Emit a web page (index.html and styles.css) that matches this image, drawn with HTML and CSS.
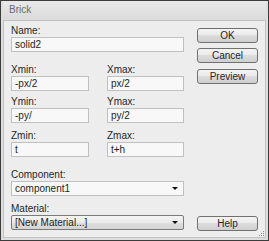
FILE: index.html
```html
<!DOCTYPE html>
<html lang="en">
<head>
<meta charset="UTF-8">
<title>Brick</title>
<link rel="stylesheet" href="styles.css">
</head>
<body>
    <div class="dialog">
        <div class="titlebar">Brick</div>
        <div class="client">
            <div class="form">
                <div class="field name-field">
                    <label>Name:</label>
                    <input type="text" value="solid2">
                </div>

                <div class="pair pair-x">
                    <div class="field">
                        <label>Xmin:</label>
                        <input type="text" value="-px/2">
                    </div>
                    <div class="field">
                        <label>Xmax:</label>
                        <input type="text" value="px/2">
                    </div>
                </div>
                <div class="pair pair-y">
                    <div class="field">
                        <label>Ymin:</label>
                        <input type="text" value="-py/">
                    </div>
                    <div class="field">
                        <label>Ymax:</label>
                        <input type="text" value="py/2">
                    </div>
                </div>
                <div class="pair pair-z">
                    <div class="field">
                        <label>Zmin:</label>
                        <input type="text" value="t">
                    </div>
                    <div class="field">
                        <label>Zmax:</label>
                        <input type="text" value="t+h">
                    </div>
                </div>

                <div class="field component-field">
                    <label>Component:</label>
                    <div class="combo">component1<span class="arrow"></span></div>
                </div>
                <div class="field material-field">
                    <label>Material:</label>
                    <div class="combo combo-button">[New Material...]<span class="arrow"></span></div>
                </div>
            </div>

            <div class="buttons">
                <button class="btn-ok">OK</button>
                <button class="btn-cancel">Cancel</button>
                <button class="btn-preview">Preview</button>
                <button class="btn-help">Help</button>
            </div>

            <svg class="grip" width="7" height="7" viewBox="0 0 7 7">
                <rect x="5" y="1" width="1" height="1" fill="#8a8a8a"/>
                <rect x="3" y="3" width="1" height="1" fill="#8a8a8a"/>
                <rect x="5" y="3" width="1" height="1" fill="#8a8a8a"/>
                <rect x="1" y="5" width="1" height="1" fill="#8a8a8a"/>
                <rect x="3" y="5" width="1" height="1" fill="#8a8a8a"/>
                <rect x="5" y="5" width="1" height="1" fill="#8a8a8a"/>
            </svg>
        </div>
    </div>
</body>
</html>
```

FILE: styles.css
```css
body {
    margin: 0;
    padding: 0;
    font-family: 'Liberation Sans', Arial, sans-serif;
    font-size: 10px;
    color: #262626;
    background-color: #ffffff;
}

.dialog {
    width: 269px;
    height: 241px;
    box-sizing: border-box;
    border: 1px solid #3c3c3c;
    padding: 0 2px 2px 2px;
    background-color: #dedede;
    display: flex;
    flex-direction: column;
}

.titlebar {
    height: 19px;
    line-height: 18px;
    padding-left: 6px;
    color: #6a6a6a;
    background: linear-gradient(#e9e9e9, #dadada);
}

.client {
    position: relative;
    flex: 1;
    display: flex;
    justify-content: space-between;
    padding: 4px 7px 6px 7px;
    border: 1px solid #c2c2c2;
    background-color: #ededed;
}

.form {
    width: 173px;
}

.field label {
    display: block;
    height: 12px;
    line-height: 12px;
}

input[type="text"],
.combo {
    display: block;
    width: 100%;
    height: 15px;
    box-sizing: border-box;
    margin: 0;
    padding: 0 3px;
    border: 1px solid #c0c0c0;
    background-color: #f8f8f8;
    font-family: 'Liberation Sans', Arial, sans-serif;
    font-size: 10px;
    color: #1e1e1e;
    line-height: 13px;
    outline: none;
}

.pair {
    display: grid;
    grid-template-columns: 78px 77px;
    column-gap: 18px;
}

/* spacing between rows */
.pair-x {margin-top: 12px;}
.pair-y {margin-top: 5px;}
.pair-z {margin-top: 7px;}
.component-field {margin-top: 12px;}
.material-field {margin-top: 7px;}

.combo {
    position: relative;
}

.combo-button {
    border-color: #7a7a7a;
    border-radius: 2px;
    background: linear-gradient(#f4f4f4, #eaeaea 50%, #dedede 51%, #d4d4d4);
}

.arrow {
    position: absolute;
    right: 5px;
    top: 5px;
    width: 0;
    height: 0;
    border-left: 3px solid transparent;
    border-right: 3px solid transparent;
    border-top: 3px solid #111111;
}

.buttons {
    width: 61px;
    display: flex;
    flex-direction: column;
    padding-top: 3px;
}

button {
    height: 15px;
    padding: 0;
    border: 1px solid #707070;
    border-radius: 3px;
    background: linear-gradient(#f3f3f3, #ebebeb 45%, #dcdcdc 50%, #cfcfcf);
    font-family: 'Liberation Sans', Arial, sans-serif;
    font-size: 10px;
    color: #262626;
    line-height: 13px;
}

.btn-cancel {margin-top: 5px;}
.btn-preview {margin-top: 6px;}
.btn-help {margin-top: auto;}

.grip {
    position: absolute;
    right: 0;
    bottom: 0;
}
```
